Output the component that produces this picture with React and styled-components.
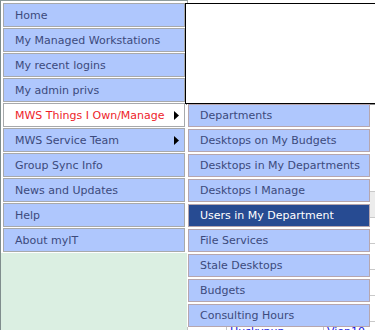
import React from "react";
import styled, { createGlobalStyle } from "styled-components";

const Global = createGlobalStyle`
  html, body { margin: 0; padding: 0; background: #ffffff; }
  body { font-family: "DejaVu Sans", Verdana, sans-serif; font-size: 11px; overflow: hidden; }
  #root { width: 375px; height: 330px; overflow: hidden; }
`;

const Page = styled.div`
  display: flex;
  width: 375px;
  height: 330px;
  overflow: hidden;
  position: relative;
`;

const Sidebar = styled.nav`
  flex: 0 0 auto;
  width: 186px;
  height: 400px;
  background: #dbefe2;
  border-top: 1px solid #8e9c9c;
  border-left: 1px solid #7f8d8d;
  border-right: 1px solid #a6abab;
`;

const Menu = styled.ul`
  list-style: none;
  margin: 0;
  padding: 2px 1px 1px 2px;
  background: #ffffff;
  display: flex;
  flex-direction: column;
  gap: 1px;
`;

const Item = styled.li`
  position: relative;
  box-sizing: border-box;
  width: 182px;
  height: ${(p) => (p.$sub ? "23px" : "24px")};
  flex-shrink: 0;
  display: flex;
  align-items: center;
  justify-content: space-between;
  padding: 0 5px 0 11px;
  border: 1px solid ${(p) => (p.$sub ? "#b6a6ae" : "#a7a9ab")};
  background: ${(p) => (p.$open ? "#ffffff" : p.$current ? "#274b92" : "#afc7fd")};
  color: ${(p) => (p.$open ? "#ee1d2a" : p.$current ? "#ffffff" : "#3c4a7c")};
  white-space: nowrap;
  cursor: default;
`;

const Arrow = styled.svg`
  width: 5px;
  height: 9px;
  flex: 0 0 auto;
`;

const Flyout = styled.ul`
  list-style: none;
  margin: 0;
  padding: 0 0 0 1px;
  background: #ffffff;
  position: absolute;
  top: 0;
  left: calc(100% + 3px);
  display: flex;
  flex-direction: column;
  gap: 2px;
  z-index: 10;
`;

const Main = styled.main`
  flex: 1 1 auto;
  display: flex;
  flex-direction: column;
  padding-top: 3px;
  position: relative;
  z-index: 3;
`;

const Notice = styled.div`
  box-sizing: border-box;
  flex: 0 0 101px;
  height: 101px;
  margin-left: -3px;
  margin-right: -4px;
  background: #ffffff;
  border: 1px solid #000000;
  box-shadow: 1px 1px 0 #8d8d8d;
`;

const Table = styled.div`
  flex-shrink: 0;
  margin-top: 87px;
  margin-left: -1px;
  display: flex;
  flex-direction: column;
`;

const Row = styled.div`
  flex-shrink: 0;
  display: grid;
  grid-template-columns: 39px 97px 1fr;
  height: 25px;
  border-top: 1px solid #c9c9c9;
  background: ${(p) => (p.$head ? "#ececec" : "#ffffff")};
`;

const Cell = styled.div`
  border-left: 1px solid #c4c4c4;
  padding: 3px 3px 0;
  font-family: "DejaVu Sans", Verdana, sans-serif;
  font-size: 11px;
  color: #1a1ae0;
  white-space: nowrap;
  overflow: hidden;
`;

const left = [
  "Home",
  "My Managed Workstations",
  "My recent logins",
  "My admin privs",
  "MWS Things I Own/Manage",
  "MWS Service Team",
  "Group Sync Info",
  "News and Updates",
  "Help",
  "About myIT",
];

const sub = [
  "Departments",
  "Desktops on My Budgets",
  "Desktops in My Departments",
  "Desktops I Manage",
  "Users in My Department",
  "File Services",
  "Stale Desktops",
  "Budgets",
  "Consulting Hours",
];

const withArrow = ["MWS Things I Own/Manage", "MWS Service Team"];

const Tri = () => (
  <Arrow viewBox="0 0 5 9">
    <polygon points="0,0 5,4.5 0,9" fill="#000000" />
  </Arrow>
);

export default function App() {
  return (
    <>
      <Global />
      <Page>
        <Sidebar>
          <Menu>
            {left.map((label) => {
              const open = label === "MWS Things I Own/Manage";
              return (
                <Item key={label} $open={open}>
                  <span>{label}</span>
                  {withArrow.includes(label) && <Tri />}
                  {open && (
                    <Flyout>
                      {sub.map((s) => (
                        <Item key={s} $sub $current={s === "Users in My Department"}>
                          <span>{s}</span>
                        </Item>
                      ))}
                    </Flyout>
                  )}
                </Item>
              );
            })}
          </Menu>
        </Sidebar>
        <Main>
          <Notice />
          <Table>
            <Row $head>
              <Cell />
              <Cell />
              <Cell />
            </Row>
            <Row>
              <Cell />
              <Cell />
              <Cell />
            </Row>
            <Row>
              <Cell />
              <Cell />
              <Cell />
            </Row>
            <Row>
              <Cell />
              <Cell />
              <Cell />
            </Row>
            <Row>
              <Cell />
              <Cell />
              <Cell />
            </Row>
            <Row>
              <Cell />
              <Cell>Huskypup</Cell>
              <Cell>Vien10</Cell>
            </Row>
          </Table>
        </Main>
      </Page>
    </>
  );
}
